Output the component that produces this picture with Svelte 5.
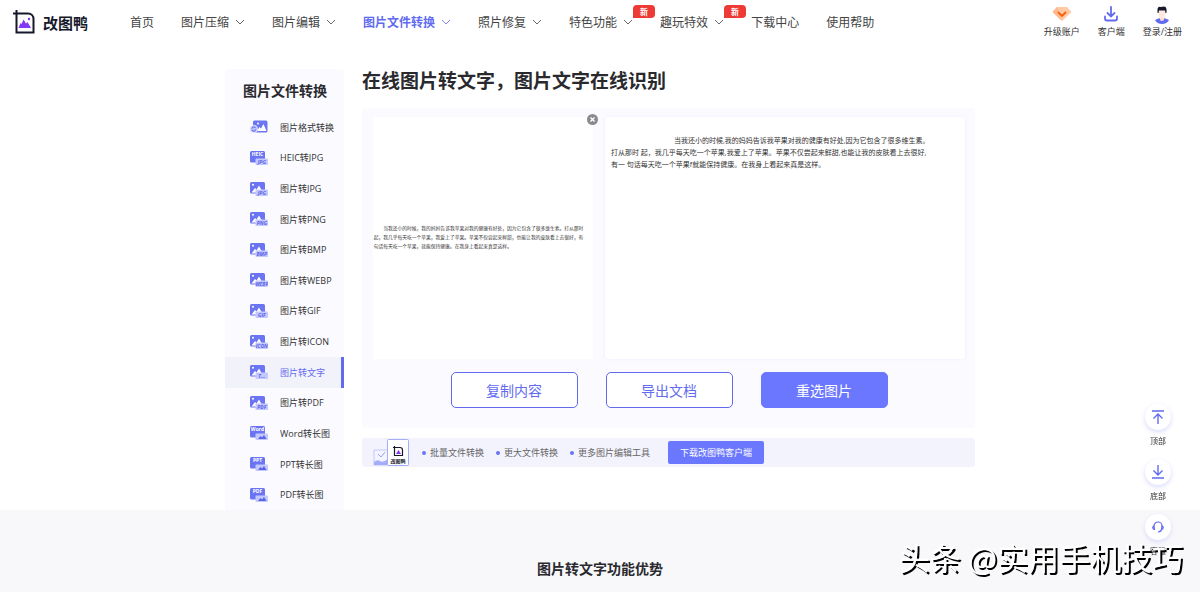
<script>
	const nav = [
		{ label: '首页' },
		{ label: '图片压缩', menu: true },
		{ label: '图片编辑', menu: true },
		{ label: '图片文件转换', menu: true, active: true },
		{ label: '照片修复', menu: true },
		{ label: '特色功能', menu: true, isNew: true },
		{ label: '趣玩特效', menu: true, isNew: true },
		{ label: '下载中心' },
		{ label: '使用帮助' }
	];

	const tools = [
		{ label: '图片格式转换', kind: 'format' },
		{ label: 'HEIC转JPG', kind: 'doc', from: 'HEIC', tag: 'JPG' },
		{ label: '图片转JPG', kind: 'image', tag: 'JPG' },
		{ label: '图片转PNG', kind: 'image', tag: 'PNG' },
		{ label: '图片转BMP', kind: 'image', tag: 'BMP' },
		{ label: '图片转WEBP', kind: 'image', tag: 'WEBP' },
		{ label: '图片转GIF', kind: 'image', tag: 'GIF' },
		{ label: '图片转ICON', kind: 'image', tag: 'ICON' },
		{ label: '图片转文字', kind: 'image', tag: 'T...' },
		{ label: '图片转PDF', kind: 'image', tag: 'PDF' },
		{ label: 'Word转长图', kind: 'doc', from: 'Word' },
		{ label: 'PPT转长图', kind: 'doc', from: 'PPT' },
		{ label: 'PDF转长图', kind: 'doc', from: 'PDF' }
	];

	const features = ['批量文件转换', '更大文件转换', '更多图片编辑工具'];

	const preview = [
		'当我还小的时候，我的妈妈告诉我苹果对我的健康有好处，因为它包含了很多维生素。打从那时',
		'起，我几乎每天吃一个苹果，我爱上了苹果。苹果不仅尝起来鲜甜，也能让我的皮肤看上去很好，有',
		'句话每天吃一个苹果，就能保持健康。在我身上看起来真是这样。'
	];

	let current = $state('图片转文字');
	let hasImage = $state(true);
	let result = $state(
		'当我还小的时候,我的妈妈告诉我苹果对我的健康有好处,因为它包含了很多维生素。\n' +
			'打从那时 起，我几乎每天吃一个苹果,我爱上了苹果。苹果不仅尝起来鲜甜,也能让我的皮肤看上去很好,\n' +
			'有一 句话每天吃一个苹果f就能保持健康。在我身上看起来真是这样。'
	);

	function copyText() {
		navigator.clipboard?.writeText(result);
	}

	function clearImage() {
		hasImage = false;
		result = '';
	}
</script>

<header class="header">
	<a class="logo" href="#home">
		<svg width="24" height="24" viewBox="0 0 24 24" fill="none">
			<path d="M4.500 0V22.500H21.500V9C21.500 6 19.500 3.500 16 3.500H1" stroke="#16182c" stroke-width="2" />
			<path d="M6.500 18L8.500 13L9.500 14L11.500 9.500L14 13.500L15.500 12L19 18Z" fill="#8338f5" />
			<circle cx="17" cy="9" r="1.200" fill="#8338f5" />
		</svg>
		<span>改图鸭</span>
	</a>

	<nav class="nav">
		{#each nav as item (item.label)}
			<a class="nav-item" class:active={item.active} href="#nav">
				{item.label}
				{#if item.menu}
					<svg class="chevron" width="10" height="6" viewBox="0 0 10 6" fill="none" stroke="currentColor">
						<path d="M1 1L5 5L9 1" />
					</svg>
				{/if}
				{#if item.isNew}<span class="badge">新</span>{/if}
			</a>
		{/each}
	</nav>

	<div class="account">
		<a href="#vip">
			<svg width="20" height="16" viewBox="0 0 20 16">
				<path d="M5 1H15L19.500 6L10 15L0.500 6Z" fill="#ffc9a3" />
				<path d="M5 1L7 6L10 15L0.500 6Z" fill="#ffb98a" />
				<path d="M6.500 6.500L10 10L13.500 6.500" fill="none" stroke="#f4600c" stroke-width="1.800" stroke-linecap="round" />
			</svg>
			<span>升级账户</span>
		</a>
		<a href="#client">
			<svg width="14" height="16" viewBox="0 0 14 16" fill="none" stroke="#626bf0" stroke-width="1.800" stroke-linecap="round">
				<path d="M7 1V10M3.500 7L7 10.500L10.500 7" />
				<path d="M1 10.500V12.500Q1 14.500 3 14.500H11Q13 14.500 13 12.500V10.500" />
			</svg>
			<span>客户端</span>
		</a>
		<a href="#login">
			<svg width="16" height="18" viewBox="0 0 16 18">
				<path d="M1 14Q8 10 15 14Q13 18 8 18Q3 18 1 14Z" fill="#626bf0" />
				<path d="M6 10H10V14Q8 16 6 14Z" fill="#fbd9cb" />
				<path d="M4.500 4H11.500V8.500Q11 12.500 8 12.500Q5 12.500 4.500 8.500Z" fill="#ffe8df" />
				<path d="M3.500 7V3Q4 0 7 1Q12 -0.500 12.500 3V7H11.500L11 4.500H5L4.500 7Z" fill="#171a2b" />
			</svg>
			<span>登录/注册</span>
		</a>
	</div>
</header>

<main class="page">
	<aside class="sidebar">
		<h2>图片文件转换</h2>
		<ul>
			{#each tools as tool (tool.label)}
				<li>
					<a class="tool" class:active={tool.label === current} href="#tool" onclick={() => (current = tool.label)}>
						<svg width="18" height="14" viewBox="0 0 18 14">
							{#if tool.kind === 'format'}
								<rect x="3" y="0.500" width="14.500" height="12" rx="1.500" fill="#6b74f2" />
								<path d="M7 11L9.500 7L11 8.500L13.500 4L16.500 11Z" fill="#fff" />
								<circle cx="8" cy="3.500" r="1" fill="#fff" />
								<circle cx="3.800" cy="9" r="3.800" fill="#b9bffb" stroke="#fff" stroke-width="0.600" />
								<path d="M1.800 8.500A2 2 0 0 1 5.500 8M5.800 9.500A2 2 0 0 1 2 10" fill="none" stroke="#5a63e8" />
							{:else}
								<rect x="0" y="0" width="15" height="11.500" rx="1.500" fill="#6b74f2" />
								{#if tool.kind === 'image'}
									<path d="M1.500 10.500L5 6L6.500 7.500L9 3.500L13 10.500Z" fill="#fff" />
									<circle cx="3" cy="2.800" r="1" fill="#fff" />
								{:else}
									<text class="from" x="7.500" y="5">{tool.from}</text>
								{/if}
								<rect x="5.500" y="7.500" width="12.500" height="6.500" rx="1" fill="#c3c8fd" />
								{#if tool.tag}
									<text class="tag" x="11.800" y="12.600">{tool.tag}</text>
								{:else}
									<path d="M8 13L10.500 10L12 11.500L14 9L16.500 13Z" fill="#5a63e8" />
								{/if}
							{/if}
						</svg>
						<span>{tool.label}</span>
					</a>
				</li>
			{/each}
		</ul>
	</aside>

	<section class="content">
		<h1>在线图片转文字，图片文字在线识别</h1>

		<div class="panel">
			<div class="work">
				<div class="preview">
					{#if hasImage}
						<svg viewBox="0 0 736 96">
							<text x="34" y="20">{preview[0]}</text>
							<text x="2" y="50">{preview[1]}</text>
							<text x="2" y="80">{preview[2]}</text>
						</svg>
						<button class="close" aria-label="删除图片" onclick={clearImage}>
							<svg width="11" height="11" viewBox="0 0 11 11">
								<circle cx="5.500" cy="5.500" r="5.500" fill="#8b8b8f" />
								<path d="M3.500 3.500L7.500 7.500M7.500 3.500L3.500 7.500" stroke="#fff" stroke-width="1.400" />
							</svg>
						</button>
					{/if}
				</div>
				<textarea class="result" aria-label="识别结果" spellcheck="false" bind:value={result}></textarea>
			</div>
			<div class="actions">
				<button class="btn" onclick={copyText}>复制内容</button>
				<button class="btn">导出文档</button>
				<button class="btn primary">重选图片</button>
			</div>
		</div>

		<div class="promo">
			<svg width="37" height="27" viewBox="0 0 37 27">
				<path d="M1 11H15V26H1Z" fill="#f3f4ff" stroke="#a6adf8" stroke-width="0.600" />
				<path d="M1 23Q4 20 7 22T15 20V26H1Z" fill="#a6adf8" />
				<path d="M5 15L8 18L12 13" fill="none" stroke="#9aa2f5" />
				<rect x="14.500" y="0.500" width="21" height="26" rx="1" fill="#fff" stroke="#a6adf8" />
				<path d="M21.500 7V16.500H29.500V11Q29.500 8.500 27 8.500H20" fill="none" stroke="#16182c" stroke-width="1.200" />
				<path d="M23 15L25.500 11L28 15Z" fill="#8338f5" />
				<text class="mark" x="25" y="24">改图鸭</text>
			</svg>
			<ul>
				{#each features as feature (feature)}
					<li>{feature}</li>
				{/each}
			</ul>
			<a class="download" href="#download">下载改图鸭客户端</a>
		</div>
	</section>
</main>

<section class="advantages">
	<h2>图片转文字功能优势</h2>
</section>

<div class="float">
	<a href="#top">
		<span class="circle">
			<svg width="14" height="14" viewBox="0 0 14 14" fill="none" stroke="#626bf0" stroke-width="1.400">
				<path d="M1 1H13M7 14V4M2.500 8.500L7 4L11.500 8.500" />
			</svg>
		</span>
		顶部
	</a>
	<a href="#bottom">
		<span class="circle">
			<svg width="14" height="14" viewBox="0 0 14 14" fill="none" stroke="#626bf0" stroke-width="1.400">
				<path d="M1 13H13M7 0V10M2.500 5.500L7 10L11.500 5.500" />
			</svg>
		</span>
		底部
	</a>
	<a href="#service">
		<span class="circle">
			<svg width="12" height="12" viewBox="0 0 12 12" fill="none" stroke="#626bf0" stroke-width="1.200" stroke-linecap="round" stroke-linejoin="round">
				<path d="M2 5A4 4 0 0 1 10 5" />
				<path d="M2 5Q0.500 5.500 0.800 7Q1 8.500 2.500 8.500ZM10 5Q11.500 5.500 11.200 7Q11 8.500 9.500 8.500ZM9.500 8.500Q9 10.800 6.500 10.800" />
			</svg>
		</span>
		客服
	</a>
</div>

<div class="watermark">头条 @实用手机技巧</div>

<style>
	:global(body) {
		background: #fff;
		color: #333;
		font-family: 'Open Sans', 'Noto Sans CJK SC', sans-serif;
		font-size: 9px;
	}

	a {
		color: inherit;
		text-decoration: none;
	}

	h1,
	h2 {
		margin: 0;
		color: #2a2a2e;
		font-weight: 700;
	}

	ul {
		list-style: none;
		margin: 0;
		padding: 0;
	}

	svg {
		display: block;
		flex-shrink: 0;
	}

	button,
	textarea {
		font-family: inherit;
	}

	.header {
		display: flex;
		align-items: center;
		height: 44px;
		padding: 0 18px 0 12px;
	}

	.logo {
		display: flex;
		align-items: center;
		gap: 7px;
		color: #16182c;
		font-size: 15px;
		font-weight: 700;
	}

	.nav {
		display: flex;
		gap: 27px;
		margin-left: 42px;
		font-size: 12px;
		color: #444;
		white-space: nowrap;
	}

	.nav-item {
		position: relative;
		display: flex;
		align-items: center;
		gap: 6px;
	}

	.nav-item.active {
		color: #626bf0;
		font-weight: 700;
	}

	.chevron {
		opacity: 0.8;
	}

	.badge {
		position: absolute;
		left: 64px;
		top: -8px;
		width: 22px;
		height: 13px;
		border-radius: 4px 4px 4px 0;
		background: #ee3a35;
		color: #fff;
		font-size: 8px;
		line-height: 13px;
		font-weight: 700;
		text-align: center;
	}

	.account {
		display: flex;
		gap: 18px;
		margin-left: auto;
	}

	.account a {
		display: flex;
		flex-direction: column;
		align-items: center;
		justify-content: space-between;
		height: 32px;
		line-height: 12px;
		white-space: nowrap;
	}

	.page {
		display: flex;
		gap: 18px;
		max-width: 750px;
		margin: 0 auto;
		padding-top: 25px;
	}

	.sidebar {
		width: 119px;
		flex-shrink: 0;
		background: #fafaff;
		border-radius: 4px 4px 0 0;
	}

	.sidebar h2 {
		padding-left: 18px;
		font-size: 14px;
		line-height: 43px;
	}

	.sidebar ul {
		display: grid;
		grid-auto-rows: 1fr;
		height: 398px;
	}

	.tool {
		display: flex;
		align-items: center;
		gap: 12px;
		height: 100%;
		box-sizing: border-box;
		padding-left: 25px;
		border-right: 3px solid transparent;
		white-space: nowrap;
	}

	.tool.active {
		background: #f2f2fb;
		border-right-color: #626bf0;
		color: #626bf0;
	}

	.from,
	.tag {
		font-size: 5px;
		font-weight: 700;
		text-anchor: middle;
		fill: #fff;
	}

	.tag {
		font-style: italic;
		fill: #5a63e8;
	}

	.content {
		flex: 1;
		min-width: 0;
	}

	h1 {
		font-size: 19px;
		line-height: 24px;
		padding-bottom: 15px;
	}

	.panel {
		padding: 9px 10px 20px 11px;
		border-radius: 4px;
		background: #fafaff;
	}

	.work {
		display: flex;
		gap: 12px;
		height: 242px;
	}

	.preview {
		position: relative;
		display: flex;
		align-items: center;
		flex: 0 0 220px;
		background: #fff;
	}

	.preview > svg {
		width: 100%;
		font-size: 16px;
		fill: #333;
	}

	.close {
		position: absolute;
		top: -3px;
		right: -5px;
		padding: 0;
		border: 0;
		background: none;
		cursor: pointer;
	}

	.result {
		flex: 1;
		min-width: 0;
		box-sizing: border-box;
		padding: 18px 6px;
		border: 0;
		border-radius: 4px;
		outline: none;
		resize: none;
		overflow: hidden;
		background: #fff;
		box-shadow: 0 0 3px #ececfa;
		color: #333;
		font-size: 7px;
		line-height: 12px;
		text-indent: 63px;
		white-space: pre-wrap;
	}

	.actions {
		display: flex;
		justify-content: center;
		gap: 28px;
		margin-top: 13px;
	}

	.btn {
		width: 127px;
		height: 36px;
		padding: 0;
		border: 1px solid #626bf0;
		border-radius: 5px;
		background: #fff;
		color: #626bf0;
		font-size: 14px;
		cursor: pointer;
	}

	.btn.primary {
		border-color: #6b77ff;
		background: #6b77ff;
		color: #fff;
	}

	.promo {
		display: flex;
		align-items: center;
		height: 29px;
		margin-top: 10px;
		padding-left: 11px;
		border-radius: 3px;
		background: #f3f3fd;
		color: #666;
	}

	.mark {
		font-size: 5px;
		font-weight: 700;
		text-anchor: middle;
		fill: #16182c;
	}

	.promo ul {
		display: flex;
		gap: 12px;
		margin: 0 18px 0 12px;
	}

	.promo li {
		display: flex;
		align-items: center;
		gap: 4px;
	}

	.promo li::before {
		content: '';
		width: 4px;
		height: 4px;
		border-radius: 50%;
		background: #6b74f2;
	}

	.download {
		padding: 0 12px;
		border-radius: 2px;
		background: #6b77ff;
		color: #fff;
		line-height: 23px;
	}

	.advantages {
		padding: 50px 0 14px;
		background: #f8f8fb;
		text-align: center;
	}

	.advantages h2 {
		font-size: 14px;
		line-height: 18px;
	}

	.float {
		position: fixed;
		right: 29px;
		bottom: 35px;
		display: flex;
		flex-direction: column;
		gap: 12px;
		font-size: 8px;
		line-height: 12px;
	}

	.float a {
		display: flex;
		flex-direction: column;
		align-items: center;
		gap: 5px;
	}

	.circle {
		display: flex;
		align-items: center;
		justify-content: center;
		width: 26px;
		height: 26px;
		border-radius: 50%;
		background: #fff;
		box-shadow: 0 2px 5px #d9dbfa;
	}

	.watermark {
		position: fixed;
		right: 17px;
		bottom: 15px;
		color: #fff;
		font-family: 'Noto Sans CJK SC', sans-serif;
		font-size: 31px;
		line-height: 40px;
		text-shadow: 2px 2px 0 #000;
		white-space: nowrap;
	}
</style>
